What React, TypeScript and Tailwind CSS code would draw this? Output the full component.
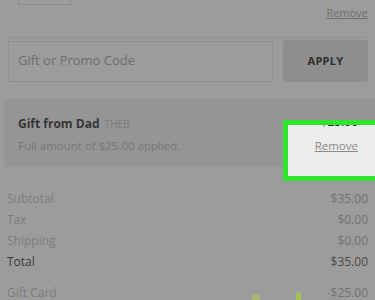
export default function App() {
  const rows = [
    { label: 'Subtotal', value: '$35.00' },
    { label: 'Tax', value: '$0.00' },
    { label: 'Shipping', value: '$0.00' },
  ];

  return (
    <div className="relative w-[375px] h-[300px] overflow-hidden bg-[#9c9c9c] font-['Open_Sans',sans-serif] text-[#7c7c7c]">
      {/* bottom edge of quantity box */}
      <div className="ml-[18px] w-[53px] h-[5px] border-x border-b border-[#8c8c8c]" />
      <div className="flex justify-end pr-[7px] mt-[1px]">
        <span className="text-[11px] leading-[14px] underline text-[#6f6f6f]">Remove</span>
      </div>

      <div className="mx-[8px] mt-[17px] border-t border-[#939393]" />

      {/* promo code */}
      <div className="flex items-center gap-[10px] pl-[8px] pr-[7px] mt-[2px]">
        <div className="flex-1 h-[41px] border border-[#8f8f8f] flex items-center pl-[9px]">
          <span className="text-[13px] text-[#6e6e6e]">Gift or Promo Code</span>
        </div>
        <div className="w-[85px] h-[42px] rounded-[3px] bg-[#8e8e8e] flex items-center justify-center">
          <span className="text-[11px] font-bold text-[#2e2e2e] tracking-wide">APPLY</span>
        </div>
      </div>

      {/* applied gift card */}
      <div className="ml-[4px] mt-[17px] h-[68px] bg-[#959595] flex items-start pl-[14px] pr-[16px] pt-[17px]">
        <div className="flex flex-col gap-[6px]">
          <div className="flex items-baseline gap-[5px] leading-[16px]">
            <span className="text-[12px] font-bold text-[#363636]">Gift from Dad</span>
            <span className="text-[10px] text-[#7a7a7a]">THEB</span>
          </div>
          <span className="text-[11.5px] leading-[16px] text-[#777777]">Full amount of $25.00 applied.</span>
        </div>
      </div>

      {/* summary */}
      <div className="flex flex-col px-[7px] mt-[21px] text-[12px]">
        {rows.map((r) => (
          <div key={r.label} className="flex justify-between h-[21px] items-center">
            <span>{r.label}</span>
            <span className="text-[#727272]">{r.value}</span>
          </div>
        ))}
        <div className="flex justify-between h-[21px] items-center text-[#3a3a3a]">
          <span>Total</span>
          <span className="text-[#4a4a4a]">$35.00</span>
        </div>
        <div className="flex justify-between h-[21px] items-center mt-[10px]">
          <span>Gift Card</span>
          <span className="text-[#727272]">-$25.00</span>
        </div>
      </div>

      {/* highlight */}
      <div className="absolute left-[283px] top-[120px] w-[100px] h-[61px] border-[5px] border-[#2ee62e] bg-[#ececec] overflow-hidden">
        <div className="flex flex-col items-end pr-[20px] -mt-[11px]">
          <span className="text-[12px] leading-[16px] text-[#2a2a2a]">$25.00</span>
          <span className="mt-[8px] text-[11.5px] leading-[16px] underline text-[#8a8a8a]">Remove</span>
        </div>
      </div>

      {/* partial marks at bottom */}
      <div className="absolute left-[252px] top-[294px] w-[8px] h-[8px] rounded-full bg-[#b6c45a] opacity-70" />
      <div className="absolute left-[296px] top-[292px] w-[5px] h-[10px] rounded-full bg-[#a8c84a] opacity-80" />
    </div>
  );
}
